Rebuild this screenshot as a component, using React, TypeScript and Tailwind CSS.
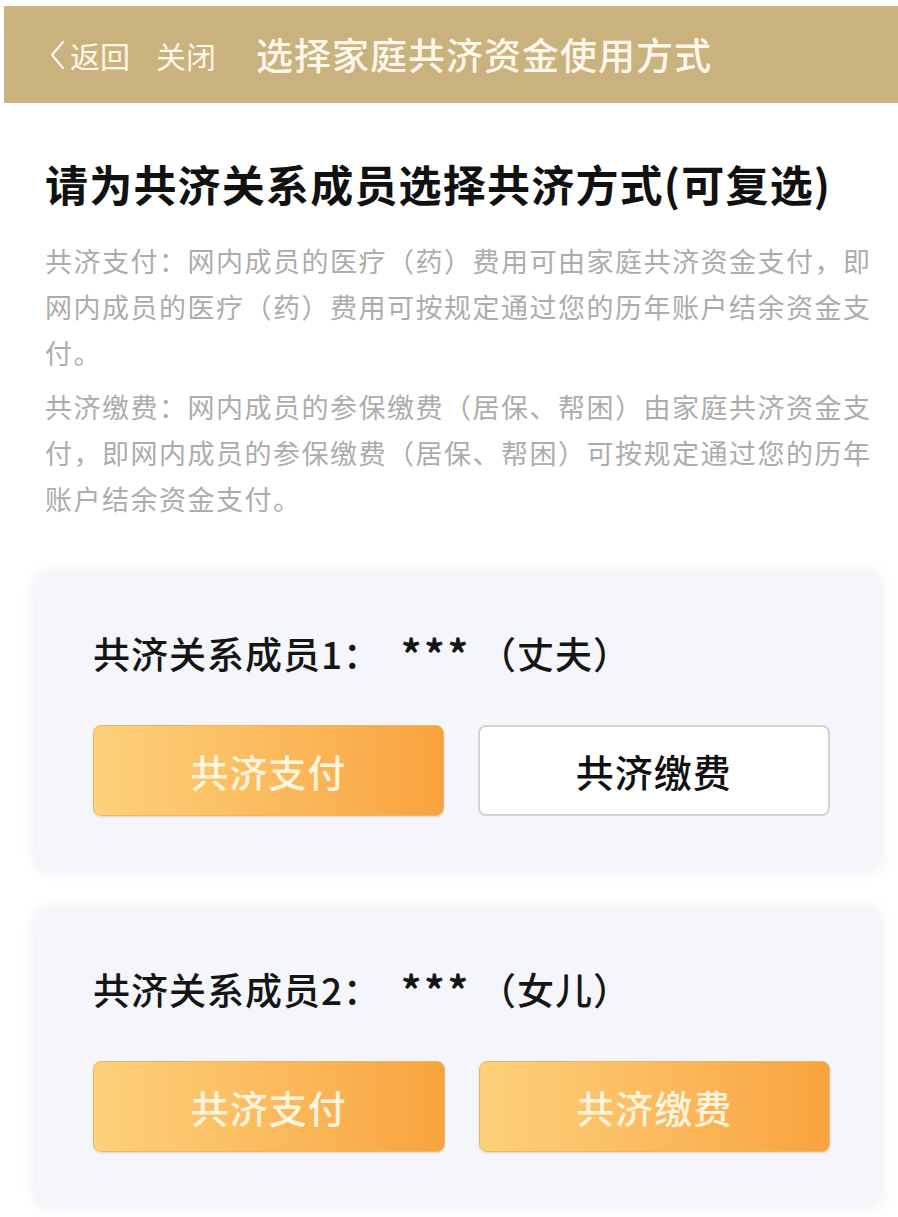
import React from 'react'

const FONT = { fontFamily: '"Noto Sans CJK SC", "Noto Sans", sans-serif' }

function ChoiceButton({ label, active }: { label: string; active: boolean }) {
  return (
    <div
      className={
        active
          ? 'flex h-[91px] flex-1 items-center justify-center rounded-[8px] border border-[#e7b86a] bg-gradient-to-r from-[#fdd17a] to-[#f8a33d] text-[38px] font-medium tracking-[1px] text-[#fff4dd] shadow-[0_1px_2px_rgba(180,120,40,0.25)]'
          : 'flex h-[91px] flex-1 items-center justify-center rounded-[8px] border-2 border-[#d3d3d6] bg-white text-[38px] font-medium tracking-[1px] text-[#111]'
      }
    >
      {label}
    </div>
  )
}

function MemberCard({ index, relation, pay, fee }: { index: number; relation: string; pay: boolean; fee: boolean }) {
  return (
    <div className="ml-[36px] mr-[18px] rounded-[10px] bg-[#f4f6fb] pb-[53px] pl-[57px] pr-[50px] pt-[53px] shadow-[0_0_14px_rgba(200,205,220,0.45)]">
      <div className="flex items-center whitespace-nowrap text-[37px] font-medium leading-[52px] tracking-[1px] text-[#151515]">
        <span>共济关系成员{index}：</span>
        <span className="ml-[20px] text-[40px] font-bold tracking-[3px]">***</span>
        <span className="ml-[8px]">（{relation}）</span>
      </div>
      <div className="mt-[46px] flex gap-[34px]">
        <ChoiceButton label="共济支付" active={pay} />
        <ChoiceButton label="共济缴费" active={fee} />
      </div>
    </div>
  )
}

export default function App() {
  return (
    <div className="min-h-[1217px] w-[898px] overflow-hidden bg-white pt-[6px]" style={FONT}>
      {/* Top bar */}
      <div className="ml-[4px] flex h-[97px] items-center bg-[#c9b27e] pl-[44px] text-[#fdf7ea]">
        <svg width="18" height="32" viewBox="0 0 18 32" className="mr-[4px]">
          <path d="M15 3 L4 16 L15 29" fill="none" stroke="#fdf7ea" strokeWidth="2.2" strokeLinejoin="round" strokeLinecap="round" />
        </svg>
        <span className="text-[30px] leading-none">返回</span>
        <span className="ml-[26px] text-[30px] leading-none">关闭</span>
        <span className="ml-[40px] text-[37px] font-medium leading-none tracking-[1px]">选择家庭共济资金使用方式</span>
      </div>

      {/* Heading */}
      <div className="pl-[45px] pt-[54px]">
        <h1 className="whitespace-nowrap text-[43px] font-bold leading-[52px] tracking-[1.2px] text-[#111]">请为共济关系成员选择共济方式(可复选)</h1>
        <div className="mt-[29px] whitespace-nowrap text-[27px] leading-[46px] tracking-[1.5px] text-[#acacac]">
          <p>
            <span className="block">共济支付：网内成员的医疗（药）费用可由家庭共济资金支付，即</span>
            <span className="block">网内成员的医疗（药）费用可按规定通过您的历年账户结余资金支</span>
            <span className="block">付。</span>
          </p>
          <p className="mt-[8px]">
            <span className="block">共济缴费：网内成员的参保缴费（居保、帮困）由家庭共济资金支</span>
            <span className="block">付，即网内成员的参保缴费（居保、帮困）可按规定通过您的历年</span>
            <span className="block">账户结余资金支付。</span>
          </p>
        </div>
      </div>

      {/* Members */}
      <div className="mt-[52px] flex flex-col gap-[41px] pb-[20px]">
        <MemberCard index={1} relation="丈夫" pay={true} fee={false} />
        <MemberCard index={2} relation="女儿" pay={true} fee={true} />
      </div>
    </div>
  )
}
